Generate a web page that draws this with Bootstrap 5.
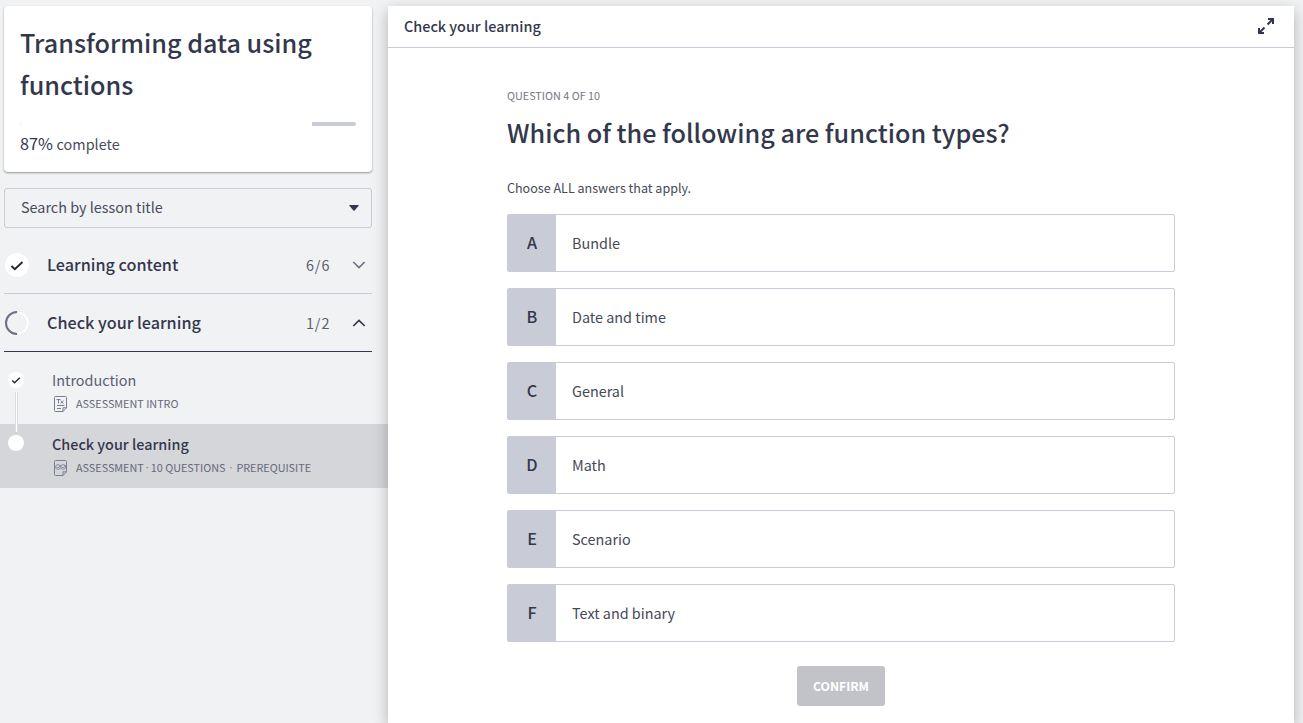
<!DOCTYPE html>
<html lang="en">
<head>
<meta charset="utf-8">
<meta name="viewport" content="width=device-width, initial-scale=1">
<title>Transforming data using functions</title>
<link href="https://cdn.jsdelivr.net/npm/bootstrap@5.3.0/dist/css/bootstrap.min.css" rel="stylesheet">
<style>
:root{--ink:#33374c;--muted-ink:#66687c;--line:#c9cbd6}
body{font-family:"Noto Sans CJK SC","Open Sans",sans-serif;font-size:14.4px;line-height:24px;color:var(--ink);background:#f1f2f4}
.side{width:388px;flex:none;padding-top:6px}
.side-inner{margin:0 16px 0 4px}
.course{height:166px;padding:15px 16px 0;border:0;border-radius:4px;box-shadow:0 1px 2px rgba(0,0,0,.4)}
.display-title{font-size:25.2px;line-height:42px;font-weight:500;margin:0;color:var(--ink)}
.course .progress{height:4px;margin-top:17px;border-radius:2px;background:var(--line)}
.course .progress-bar{background:#fff}
.done{margin-top:5px;line-height:24px;color:#494c5c}
.done span{font-size:16.2px;color:var(--ink);margin-right:.5px}
.finder{height:40px;margin-top:16px;padding:0 12px 2px 16px;border:1px solid var(--line);border-radius:3px;background:transparent;color:#494c5c}
.section-row{height:58px;border-bottom:1px solid var(--line);padding:0 6px 0 1px}
.section-row.open{border-color:var(--ink)}
.section-name{font-size:16.2px;font-weight:500;margin-left:18px;padding-bottom:2px}
.tally{letter-spacing:1px;margin-right:21.500px;color:#5b5e70}
.lesson{height:64px;padding:8px 0 0 8px}
.lesson.current{background:#d5d6da}
.dot{width:16px;height:16px;border-radius:50%;background:#fff;margin:4px 28px 0 0;flex:none}
.current .dot{margin-top:3px}
.link-line{left:15px;top:32px;width:3px;height:40px;background:#fff;border:solid #dcdde2;border-width:0 1px;z-index:1}
.lesson-title{color:#5b5e74}
.current .lesson-title{font-weight:500;color:var(--ink)}
.meta{font-size:10.8px;color:var(--muted-ink);line-height:22px;padding-bottom:2px}
.meta svg{margin:2px 8px 0 2px}
.sep{font-family:"Liberation Sans",sans-serif;width:7px;text-align:center}
.sep.wide{width:11px}
.panel{width:906px;margin-top:6px;background:#fff;box-shadow:0 5px 14px rgba(0,0,0,.27)}
.panel-head{height:42px;border-bottom:1px solid var(--line);padding:0 19px 2px 16px;font-weight:500}
.quiz{width:668px;margin:0 auto;padding-top:39px}
.counter{font-size:10.8px;line-height:16px;color:#747684}
.hint{font-size:12.55px;line-height:20px;margin:25px 0 16px;color:#464958}
.answer{height:58px;border:1px solid var(--line);border-radius:2px;color:#464958}
.key{width:48px;padding-bottom:2px;background:var(--line);font-size:16.2px;font-weight:500;color:var(--ink)}
.btn.confirm{width:88px;height:40px;margin-top:24px;padding:0;border:0;border-radius:3px;background:#c2c3c9;color:#fff;font-size:12.2px;font-weight:700;opacity:1}
</style>
</head>
<body class="overflow-hidden">
<div class="d-flex vh-100">
  <aside class="side">
    <div class="side-inner">
      <div class="card course">
        <h1 class="display-title">Transforming data using functions</h1>
        <div class="progress"><div class="progress-bar" style="width:87%"></div></div>
        <div class="done"><span>87%</span> complete</div>
      </div>
      <div class="finder d-flex align-items-center justify-content-between">
        <span>Search by lesson title</span>
        <svg width="10" height="6" viewBox="0 0 10 6" style="margin-top:2px"><path d="M.7 0h8.6q.9 0 .3.8L5.6 5.5q-.6.6-1.2 0L.4.8Q-.2 0 .7 0z" fill="#33374c"/></svg>
      </div>
      <div class="section-row d-flex align-items-center mt-2">
        <svg width="24" height="24" viewBox="0 0 24 24"><circle cx="12" cy="12" r="12" fill="#fff"/><path d="M6.5 13l3.3 3.2L17.5 9" fill="none" stroke="#25262e" stroke-width="1.9"/></svg>
        <span class="section-name">Learning content</span>
        <span class="tally ms-auto">6/6</span>
        <svg width="14" height="8" viewBox="0 0 14 8"><path d="M1.3 1L7 6.6 12.7 1" fill="none" stroke="#6f7288" stroke-width="1.7"/></svg>
      </div>
      <div class="section-row open d-flex align-items-center">
        <svg width="24" height="24" viewBox="0 0 24 24"><circle cx="12" cy="12" r="11.5" fill="none" stroke="#d8d9de"/><path d="M12.5 1.5a10.5 10.5 0 0 1 0 21" fill="none" stroke="#fff" stroke-width="2"/><path d="M12 1a11 11 0 0 0 0 22" fill="none" stroke="#6c6f86" stroke-width="2"/></svg>
        <span class="section-name">Check your learning</span>
        <span class="tally ms-auto">1/2</span>
        <svg width="14" height="8" viewBox="0 0 14 8"><path d="M1.3 7L7 1.4 12.7 7" fill="none" stroke="#33374c" stroke-width="1.7"/></svg>
      </div>
    </div>
    <div class="pt-2">
      <div class="lesson d-flex position-relative">
        <div class="dot d-flex"><svg width="16" height="16" viewBox="0 0 16 16"><path d="M4.2 8.4l2.4 2.3 5.2-5" fill="none" stroke="#25262e" stroke-width="1.4"/></svg></div>
        <div class="link-line position-absolute"></div>
        <div>
          <div class="lesson-title">Introduction</div>
          <div class="meta d-flex align-items-center"><svg width="14" height="16" viewBox="0 0 14 16" fill="none" stroke="#7b7e92"><path d="M1.5.5h10q1 0 1 1v10.3l-3.500 3.700H1.5q-1 0-1-1v-13q0-1 1-1zM12.500 11.800H9v3.700"/><path d="M2.500 3.500h4M4.500 3.500v4M6.500 4.800l3 2.700M9.500 4.800l-3 2.700M3 9.500h7.500M3 12.500h4"/></svg>ASSESSMENT INTRO</div>
        </div>
      </div>
      <div class="lesson current d-flex">
        <div class="dot"></div>
        <div>
          <div class="lesson-title">Check your learning</div>
          <div class="meta d-flex align-items-center"><svg width="14" height="16" viewBox="0 0 14 16" fill="none" stroke="#7b7e92"><path d="M1.500.5h10q1 0 1 1v10.300l-3.500 3.700H1.500q-1 0-1-1v-13q0-1 1-1zM12.500 11.800H9v3.700"/><g stroke-width=".8"><circle cx="4" cy="7" r="2.400"/><circle cx="9.200" cy="7" r="2.400"/><path d="M2.500 7L4 8l2.700-3.200M7.700 7l1.500 1 2.700-3.200"/></g></svg>ASSESSMENT<span class="sep">·</span>10 QUESTIONS<span class="sep wide">·</span>PREREQUISITE</div>
        </div>
      </div>
    </div>
  </aside>
  <main class="panel">
    <div class="panel-head d-flex align-items-center justify-content-between">
      <span>Check your learning</span>
      <svg width="18" height="18" viewBox="0 0 18 18" fill="none" stroke="#33374c" stroke-width="2"><path d="M11 2h5v5M15.500 2.500l-5 5M2 11v5h5M2.500 15.500l5-5"/></svg>
    </div>
    <div class="quiz">
      <div class="counter">QUESTION 4 OF 10</div>
      <h2 class="display-title mt-2">Which of the following are function types?</h2>
      <p class="hint">Choose ALL answers that apply.</p>
      <div class="d-flex flex-column gap-3">
        <div class="answer d-flex align-items-stretch"><div class="key d-flex align-items-center justify-content-center">A</div><div class="d-flex align-items-center px-3">Bundle</div></div>
        <div class="answer d-flex align-items-stretch"><div class="key d-flex align-items-center justify-content-center">B</div><div class="d-flex align-items-center px-3">Date and time</div></div>
        <div class="answer d-flex align-items-stretch"><div class="key d-flex align-items-center justify-content-center">C</div><div class="d-flex align-items-center px-3">General</div></div>
        <div class="answer d-flex align-items-stretch"><div class="key d-flex align-items-center justify-content-center">D</div><div class="d-flex align-items-center px-3">Math</div></div>
        <div class="answer d-flex align-items-stretch"><div class="key d-flex align-items-center justify-content-center">E</div><div class="d-flex align-items-center px-3">Scenario</div></div>
        <div class="answer d-flex align-items-stretch"><div class="key d-flex align-items-center justify-content-center">F</div><div class="d-flex align-items-center px-3">Text and binary</div></div>
      </div>
      <button type="button" class="btn confirm d-block mx-auto">CONFIRM</button>
    </div>
  </main>
</div>
<script src="https://cdn.jsdelivr.net/npm/bootstrap@5.3.0/dist/js/bootstrap.bundle.min.js"></script>
</body>
</html>
